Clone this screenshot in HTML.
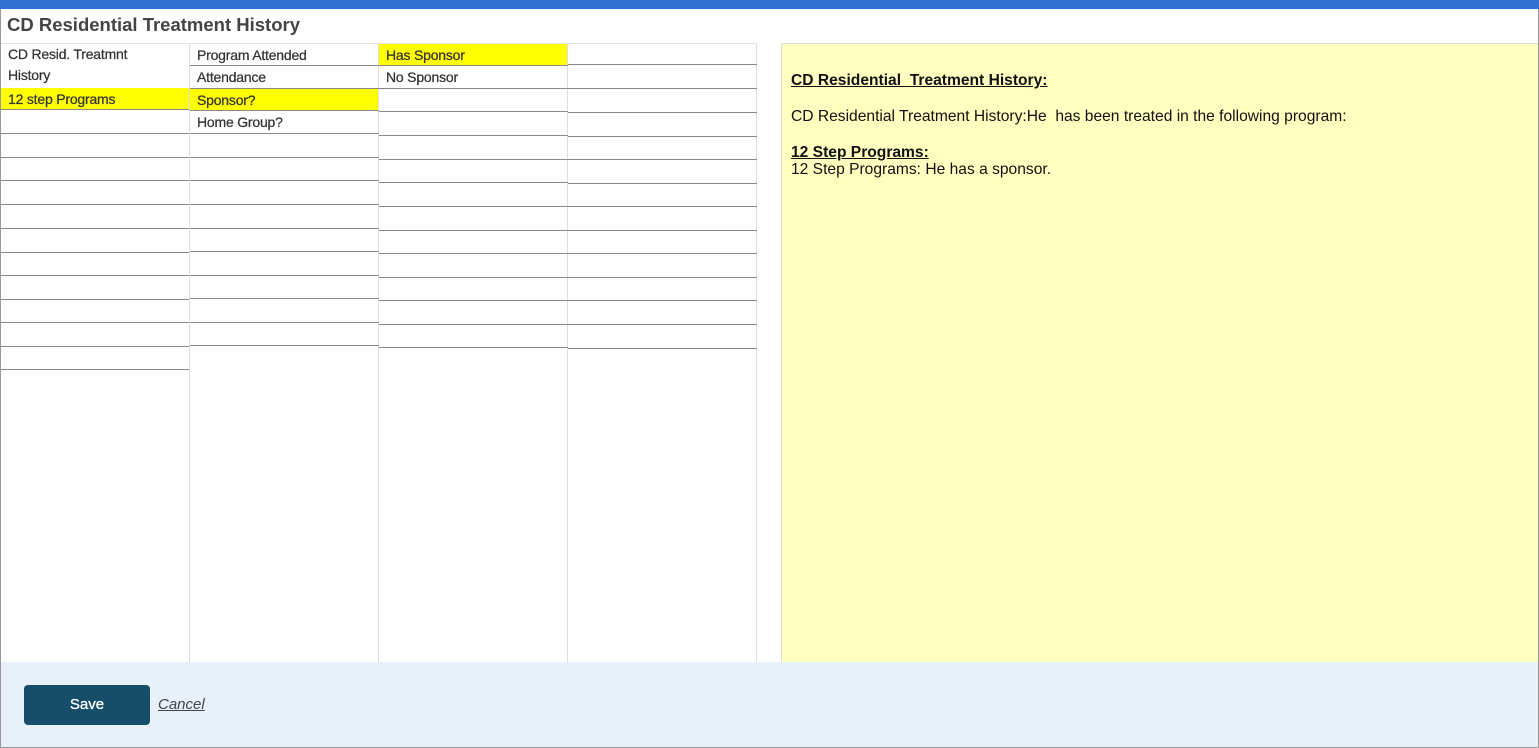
<!DOCTYPE html>
<html><head><style>
*{margin:0;padding:0;box-sizing:border-box}
body{width:1539px;height:748px;position:relative;background:#fff;font-family:"Liberation Sans",sans-serif;overflow:hidden}
.a{position:absolute}
.l{position:absolute;height:1px;background:#888;width:189px}
.t{position:absolute;font-size:14px;color:#333;letter-spacing:-0.2px;padding-left:7px;line-height:22px;-webkit-text-stroke:0.25px #333}
.y{background:#ffff00}
.v{position:absolute;top:44px;width:1px;height:618px;background:#ddd}
</style></head><body>
<div class="a" style="left:0;top:0;width:1539px;height:9px;background:#2f73d2"></div>
<div class="a" style="left:7px;top:14px;font-size:18.5px;font-weight:bold;color:#444;letter-spacing:0px">CD Residential Treatment History</div>
<div class="a" style="left:0;top:43px;width:757px;height:1px;background:#e4e4e4"></div>
<div class="v" style="left:189px"></div><div class="v" style="left:378px"></div><div class="v" style="left:567px"></div><div class="v" style="left:756px"></div>

<div class="t" style="left:1px;top:44px;width:188px;line-height:21px">CD Resid. Treatmnt<br>History</div>
<div class="t y" style="left:0;top:88px;width:189px;height:21px;padding-left:8px">12 step Programs</div>
<div class="l" style="left:0;top:109px"></div><div class="l" style="left:0;top:133px"></div><div class="l" style="left:0;top:157px"></div><div class="l" style="left:0;top:180px"></div><div class="l" style="left:0;top:204px"></div><div class="l" style="left:0;top:228px"></div><div class="l" style="left:0;top:252px"></div><div class="l" style="left:0;top:275px"></div><div class="l" style="left:0;top:299px"></div><div class="l" style="left:0;top:322px"></div><div class="l" style="left:0;top:346px"></div><div class="l" style="left:0;top:369px"></div>

<div class="t" style="left:190px;top:44px">Program Attended</div>
<div class="t" style="left:190px;top:66px">Attendance</div>
<div class="t y" style="left:190px;top:89px;width:188px;height:21px">Sponsor?</div>
<div class="t" style="left:190px;top:111px">Home Group?</div>
<div class="l" style="left:190px;top:65px"></div><div class="l" style="left:190px;top:88px"></div><div class="l" style="left:190px;top:110px"></div><div class="l" style="left:190px;top:133px"></div><div class="l" style="left:190px;top:157px"></div><div class="l" style="left:190px;top:180px"></div><div class="l" style="left:190px;top:204px"></div><div class="l" style="left:190px;top:228px"></div><div class="l" style="left:190px;top:251px"></div><div class="l" style="left:190px;top:275px"></div><div class="l" style="left:190px;top:298px"></div><div class="l" style="left:190px;top:322px"></div><div class="l" style="left:190px;top:345px"></div>

<div class="t y" style="left:379px;top:44px;width:188px;height:21px">Has Sponsor</div>
<div class="t" style="left:379px;top:66px">No Sponsor</div>
<div class="l" style="left:379px;top:65px"></div><div class="l" style="left:379px;top:88px"></div><div class="l" style="left:379px;top:111px"></div><div class="l" style="left:379px;top:135px"></div><div class="l" style="left:379px;top:159px"></div><div class="l" style="left:379px;top:182px"></div><div class="l" style="left:379px;top:206px"></div><div class="l" style="left:379px;top:230px"></div><div class="l" style="left:379px;top:253px"></div><div class="l" style="left:379px;top:277px"></div><div class="l" style="left:379px;top:300px"></div><div class="l" style="left:379px;top:324px"></div><div class="l" style="left:379px;top:347px"></div>

<div class="l" style="left:568px;top:64px"></div><div class="l" style="left:568px;top:88px"></div><div class="l" style="left:568px;top:112px"></div><div class="l" style="left:568px;top:136px"></div><div class="l" style="left:568px;top:159px"></div><div class="l" style="left:568px;top:183px"></div><div class="l" style="left:568px;top:206px"></div><div class="l" style="left:568px;top:230px"></div><div class="l" style="left:568px;top:253px"></div><div class="l" style="left:568px;top:277px"></div><div class="l" style="left:568px;top:300px"></div><div class="l" style="left:568px;top:324px"></div><div class="l" style="left:568px;top:348px"></div>

<div class="a" style="left:781px;top:43px;width:757px;height:619px;background:#ffffc0;border-top:1px solid #ddd;border-left:1px solid #ddd;padding:28px 0 0 9px;font-size:15.6px;color:#111;line-height:18px">
<div style="font-weight:bold;text-decoration:underline">CD Residential&nbsp; Treatment History:</div>
<div style="margin-top:18px">CD Residential Treatment History:He&nbsp; has been treated in the following program:</div>
<div style="margin-top:18px;font-weight:bold;text-decoration:underline;line-height:17px">12 Step Programs:</div>
<div style="line-height:17px">12 Step Programs: He has a sponsor.</div>
</div>

<div class="a" style="left:0;top:662px;width:1539px;height:86px;background:#e8f0f9"></div>
<div class="a" style="left:24px;top:685px;width:126px;height:40px;background:#164d69;border-radius:4px;color:#fff;font-size:15px;text-align:center;line-height:40px;-webkit-text-stroke:0.3px #fff">Save</div>
<div class="a" style="left:158px;top:696px;font-size:15px;color:#444;font-style:italic;text-decoration:underline">Cancel</div>
<div class="a" style="left:0;top:9px;width:1px;height:739px;background:#999"></div>
<div class="a" style="left:1538px;top:9px;width:1px;height:739px;background:#999"></div>
<div class="a" style="left:0;top:747px;width:1539px;height:1px;background:#999"></div>
</body></html>
